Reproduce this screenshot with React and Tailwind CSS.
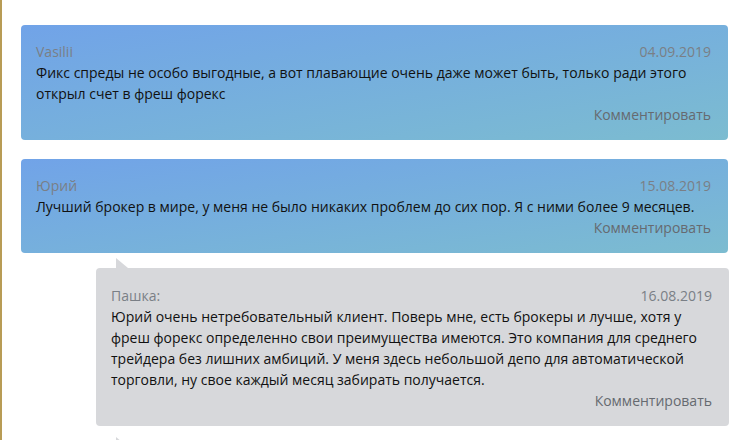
import React from "react";

const comments = [
  {
    id: 1,
    author: "Vasilii",
    date: "04.09.2019",
    text: "Фикс спреды не особо выгодные, а вот плавающие очень даже может быть, только ради этого открыл счет в фреш форекс",
  },
  {
    id: 2,
    author: "Юрий",
    date: "15.08.2019",
    text: "Лучший брокер в мире, у меня не было никаких проблем до сих пор. Я с ними более 9 месяцев.",
    replies: [
      {
        id: 3,
        author: "Пашка:",
        date: "16.08.2019",
        text: "Юрий очень нетребовательный клиент. Поверь мне, есть брокеры и лучше, хотя у фреш форекс определенно свои преимущества имеются. Это компания для среднего трейдера без лишних амбиций. У меня здесь небольшой депо для автоматической торговли, ну свое каждый месяц забирать получается.",
      },
    ],
  },
];

const CardBody = ({ c }) => (
  <>
    <div className="flex justify-between text-[#7a7f86]">
      <span>{c.author}</span>
      <span>{c.date}</span>
    </div>
    <p className="text-[#111]">{c.text}</p>
    <div className="text-right text-[#666a70]">Комментировать</div>
  </>
);

const Arrow = () => (
  <span className="absolute left-[20px] top-[-10px] w-0 h-0 border-l-[12px] border-l-[#d7d8db] border-t-[10px] border-t-transparent" />
);

const Reply = ({ c }) => (
  <div className="relative ml-[75px] mt-[15px] mr-[-1px]">
    <Arrow />
    <div className="bg-[#d7d8db] rounded-[4px] pl-[15px] pr-[17px] pt-[17px] pb-[15px]">
      <CardBody c={c} />
    </div>
  </div>
);

export default function App() {
  return (
    <div
      className="h-[440px] overflow-hidden bg-white border-l-2 border-[#b89c55] pl-[19px] pr-[14px] pt-[25px] text-[14px] leading-[21px]"
      style={{ fontFamily: '"Open Sans", "Noto Sans", sans-serif' }}
    >
      {comments.map((c) => (
        <div key={c.id} className="mb-[19px]">
          <div className="rounded-[4px] bg-linear-to-br from-[#71a3e8] to-[#7cbcd0] pl-[15px] pr-[17px] pt-[16px] pb-[15px]">
            <CardBody c={c} />
          </div>
          {c.replies && c.replies.map((r) => <Reply key={r.id} c={r} />)}
          {c.replies && (
            <div className="relative ml-[75px] mt-[21px] mr-[-1px]">
              <Arrow />
              <div className="bg-[#d7d8db] rounded-[4px] h-[60px]" />
            </div>
          )}
        </div>
      ))}
    </div>
  );
}
